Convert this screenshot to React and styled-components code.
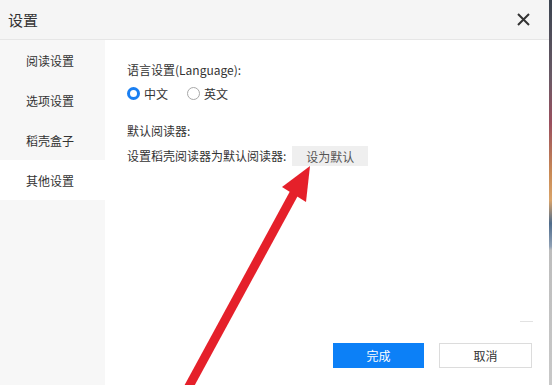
import React, { useState } from 'react';
import styled, { createGlobalStyle } from 'styled-components';

const GlobalStyle = createGlobalStyle`
    html, body {
        margin: 0;
        padding: 0;
        width: 552px;
        height: 385px;
        overflow: hidden;
        background: linear-gradient(180deg, #3b4450 0%, #6a5a66 20%, #9a4f5e 32%, #c98a55 45%, #d9a36a 52%, #4f6c8c 58%, #8fa0b4 64%, #bdbdbd 65%, #c8c8c8 100%);
        font-family: "Noto Sans CJK SC", "Noto Sans", sans-serif;
    }
`

const Dialog = styled.div`
    position: relative;
    width: 549px;
    height: 385px;
    background: #ffffff;
    display: flex;
    flex-direction: column;
    `

const Header = styled.div`
    height: 39px;
    border-bottom: 1px solid #e6e6e6;
    background: #f5f5f5;
    display: flex;
    align-items: center;
    justify-content: space-between;
    padding: 0 19px 0 8px;
    `

const Title = styled.h1`
    margin: 0;
    font-size: 15px;
    font-weight: normal;
    color: #333333;
    `

const CloseButton = styled.button`
    border: none;
    background: none;
    padding: 0;
    width: 13px;
    height: 13px;
    cursor: pointer;
    display: flex;
    `

const Body = styled.div`
    flex: 1;
    display: flex;
    `

const Sidebar = styled.div`
    width: 105px;
    background: #f7f7f7;
    `

const NavItem = styled.div`
    height: 40px;
    display: flex;
    align-items: center;
    padding-left: 26px;
    font-size: 12px;
    color: #333333;
    cursor: pointer;
    ${props => props.active && 'background: #ffffff;'}
    `

const Content = styled.div`
    flex: 1;
    position: relative;
    display: flex;
    flex-direction: column;
    padding: 21px 0 0 22px;
    `

const Label = styled.div`
    font-size: 12px;
    color: #333333;
    line-height: 18px;
    `

const RadioRow = styled.div`
    display: flex;
    align-items: center;
    gap: 19px;
    margin-top: 6px;
    `

const RadioOption = styled.label`
    display: flex;
    align-items: center;
    gap: 4px;
    font-size: 12px;
    color: #333333;
    cursor: pointer;
    `

const RadioCircle = styled.span`
    box-sizing: border-box;
    width: 13px;
    height: 13px;
    border-radius: 50%;
    border: ${props => props.checked ? '3.5px solid #1a7ff2' : '1px solid #a8a8a8'};
    background: #ffffff;
    `

const Section = styled.div`
    margin-top: 20px;
    display: flex;
    flex-direction: column;
    gap: 6px;
    `

const DefaultRow = styled.div`
    display: flex;
    align-items: center;
    gap: 6px;
    `

const GrayButton = styled.button`
    height: 20px;
    padding: 0 14px;
    border: none;
    background: #efefef;
    color: #555555;
    font-family: inherit;
    font-size: 12px;
    cursor: pointer;
    `

const Footer = styled.div`
    margin-top: auto;
    display: flex;
    justify-content: flex-end;
    gap: 15px;
    padding: 0 17px 17px 0;
    `

const FooterButton = styled.button`
    box-sizing: border-box;
    width: ${props => props.primary ? '91px' : '93px'};
    height: 25px;
    font-family: inherit;
    font-size: 12px;
    cursor: pointer;
    border: ${props => props.primary ? 'none' : '1px solid #dcdcdc'};
    background: ${props => props.primary ? '#0c80f7' : '#ffffff'};
    color: ${props => props.primary ? '#ffffff' : '#333333'};
    `

const Divider = styled.div`
    position: absolute;
    right: 16px;
    top: 281px;
    width: 13px;
    height: 1px;
    background: #e2e2e2;
    `

const ArrowOverlay = styled.svg`
    position: absolute;
    left: 0;
    top: 0;
    pointer-events: none;
    `

const navItems = ['阅读设置', '选项设置', '稻壳盒子', '其他设置']

const App = () => {
    const [lang, setLang] = useState('zh')

    return (
        <>
            <GlobalStyle />
            <Dialog>
                <Header>
                    <Title>设置</Title>
                    <CloseButton>
                        <svg width="13" height="13" viewBox="0 0 13 13">
                            <path d="M1 1 L12 12 M12 1 L1 12" stroke="#333" strokeWidth="2" />
                        </svg>
                    </CloseButton>
                </Header>
                <Body>
                    <Sidebar>
                        {navItems.map(item => (
                            <NavItem key={item} active={item === '其他设置'}>{item}</NavItem>
                        ))}
                    </Sidebar>
                    <Content>
                        <Label>语言设置(Language):</Label>
                        <RadioRow>
                            <RadioOption onClick={() => setLang('zh')}>
                                <RadioCircle checked={lang === 'zh'} />中文
                            </RadioOption>
                            <RadioOption onClick={() => setLang('en')}>
                                <RadioCircle checked={lang === 'en'} />英文
                            </RadioOption>
                        </RadioRow>
                        <Section>
                            <Label>默认阅读器:</Label>
                            <DefaultRow>
                                <Label>设置稻壳阅读器为默认阅读器:</Label>
                                <GrayButton>设为默认</GrayButton>
                            </DefaultRow>
                        </Section>
                        <Divider />
                        <Footer>
                            <FooterButton primary>完成</FooterButton>
                            <FooterButton>取消</FooterButton>
                        </Footer>
                    </Content>
                </Body>
                <ArrowOverlay width="549" height="385" viewBox="0 0 549 385">
                    <line x1="187" y1="390" x2="298" y2="186" stroke="#e5202a" strokeWidth="9" />
                    <polygon points="310,166 282,187 306,202" fill="#e5202a" />
                </ArrowOverlay>
            </Dialog>
        </>
    )
}

export default App;
